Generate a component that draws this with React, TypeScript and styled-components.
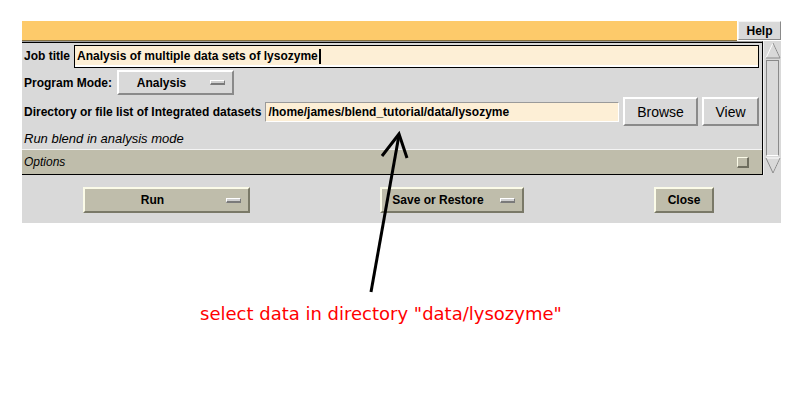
import React from "react";
import styled, { createGlobalStyle } from "styled-components";

const Global = createGlobalStyle`
  html, body { margin: 0; padding: 0; background: #ffffff; }
  body { font-family: "Liberation Sans", Arial, sans-serif; }
`;

const GRAY = "#d9d9d9";
const OLIVE = "#bfbdab";
const CREAM = "#fdefd6";
const ORANGE = "#fdca6a";

const Page = styled.div`
  position: relative;
  width: 800px;
  height: 400px;
  overflow: hidden;
  background: #fff;
`;

const Window = styled.div`
  margin: 21px 0 0 22px;
  width: 759px;
  display: flex;
  flex-direction: column;
`;

const TitleBar = styled.div`
  display: flex;
  height: 20px;
  gap: 1px;
`;

const Banner = styled.div`
  flex: 1;
  background: ${ORANGE};
  border-bottom: 1px solid #85703f;
`;

const HelpButton = styled.div`
  width: 43px;
  height: 19px;
  box-sizing: border-box;
  background: ${GRAY};
  border-top: 1px solid #f4f4f4;
  border-left: 1px solid #f4f4f4;
  border-right: 1px solid #8a8a8a;
  border-bottom: 1px solid #8a8a8a;
  display: flex;
  align-items: center;
  justify-content: center;
  font-size: 12px;
  font-weight: bold;
  color: #000;
`;

const Main = styled.div`
  display: flex;
  height: 134px;
`;

const Form = styled.div`
  width: 741px;
  box-sizing: border-box;
  background: ${GRAY};
  border-top: 1px solid #9a9a9a;
  border-right: 1px solid #000;
  border-bottom: 1px solid #000;
  padding-top: 1px;
  box-shadow: inset 0 1px 0 #000;
  display: flex;
  flex-direction: column;
`;

const Row = styled.div<{ $h: number }>`
  height: ${(p) => p.$h}px;
  display: flex;
  align-items: center;
  padding: 0 3px 0 2px;
  gap: 4px;
`;

const Label = styled.span<{ $w?: number }>`
  font-size: 12px;
  font-weight: bold;
  color: #000;
  white-space: nowrap;
  ${(p) => (p.$w ? `width: ${p.$w}px;` : "")}
`;

const TextField = styled.div<{ $focused?: boolean; $h: number }>`
  flex: 1;
  height: ${(p) => p.$h}px;
  box-sizing: border-box;
  background: ${CREAM};
  display: flex;
  align-items: center;
  padding-left: 2px;
  font-size: 12px;
  font-weight: bold;
  color: #000;
  white-space: nowrap;
  ${(p) =>
    p.$focused
      ? `border: 1px solid #000; box-shadow: inset 0 -2px 0 #ffffff;`
      : `border-top: 1px solid #9a9a9a; border-left: 1px solid #9a9a9a; border-right: 1px solid #ffffff; border-bottom: 1px solid #ffffff;`}
`;

const Caret = styled.span`
  display: inline-block;
  width: 2px;
  height: 15px;
  background: #000;
  margin-left: 1px;
`;

const MenuButton = styled.div<{ $w: number; $h: number; $tone: "gray" | "olive" }>`
  width: ${(p) => p.$w}px;
  height: ${(p) => p.$h}px;
  box-sizing: border-box;
  background: ${(p) => (p.$tone === "olive" ? OLIVE : GRAY)};
  border-top: 2px solid ${(p) => (p.$tone === "olive" ? "#fbfbe8" : "#ffffff")};
  border-left: 2px solid ${(p) => (p.$tone === "olive" ? "#fbfbe8" : "#ffffff")};
  border-right: 2px solid ${(p) => (p.$tone === "olive" ? "#7a7968" : "#8a8a8a")};
  border-bottom: 2px solid ${(p) => (p.$tone === "olive" ? "#7a7968" : "#8a8a8a")};
  display: flex;
  align-items: center;
  font-size: 12px;
  font-weight: bold;
  color: #000;
  flex-shrink: 0;
`;

const MenuText = styled.span`
  flex: 1;
  text-align: center;
  white-space: nowrap;
`;

const Indicator = styled.span`
  width: 15px;
  height: 5px;
  box-sizing: border-box;
  margin: 0 7px 0 6px;
  border-top: 1px solid #ffffff;
  border-left: 1px solid #ffffff;
  border-right: 1px solid #7a7a7a;
  border-bottom: 2px solid #7a7a7a;
  background: #cfcfcf;
  flex-shrink: 0;
`;

const PushButton = styled.div<{ $w: number }>`
  width: ${(p) => p.$w}px;
  height: 29px;
  box-sizing: border-box;
  background: ${GRAY};
  border-top: 2px solid #ffffff;
  border-left: 2px solid #ffffff;
  border-right: 2px solid #8a8a8a;
  border-bottom: 2px solid #8a8a8a;
  display: flex;
  align-items: center;
  justify-content: center;
  font-size: 14px;
  color: #000;
  flex-shrink: 0;
`;

const Hint = styled.div`
  height: 22px;
  display: flex;
  align-items: center;
  padding-left: 2px;
  font-size: 13px;
  font-style: italic;
  color: #000;
`;

const Divider = styled.div`
  height: 1px;
  background: #f4f4f4;
`;

const OptionsBar = styled.div`
  height: 24px;
  background: ${OLIVE};
  display: flex;
  align-items: center;
  justify-content: space-between;
  padding: 0 13px 0 2px;
  font-size: 12px;
  font-style: italic;
  color: #000;
`;

const ToggleBox = styled.span`
  width: 12px;
  height: 11px;
  box-sizing: border-box;
  border-top: 1px solid #fbfbe8;
  border-left: 1px solid #fbfbe8;
  border-right: 2px solid #6f6e5f;
  border-bottom: 2px solid #6f6e5f;
  background: ${OLIVE};
`;

const Scrollbar = styled.div`
  width: 18px;
  box-sizing: border-box;
  background: ${GRAY};
  border-left: 1px solid #efefef;
  display: flex;
  flex-direction: column;
  align-items: center;
  padding: 1px 0 1px;
`;

const Slider = styled.div`
  flex: 1;
  width: 13px;
  box-sizing: border-box;
  border-left: 1px solid #8a8a8a;
  border-right: 1px solid #8a8a8a;
  border-top: 1px solid #8a8a8a;
  border-bottom: 1px solid #ffffff;
  background: ${GRAY};
  margin: 1px 0;
`;

const ActionBar = styled.div`
  height: 48px;
  box-sizing: border-box;
  background: ${GRAY};
  display: flex;
  align-items: flex-start;
  padding: 12px 0 0 61px;
  gap: 130px;
`;

const Note = styled.div`
  margin: 80px 0 0 200px;
  font-family: "DejaVu Sans", sans-serif;
  font-size: 18px;
  color: #ff0000;
  white-space: nowrap;
`;

const Overlay = styled.svg`
  position: absolute;
  left: 0;
  top: 0;
  pointer-events: none;
`;

const ScrollArrow: React.FC<{ dir: "up" | "down" }> = ({ dir }) => (
  <svg width="16" height="17" viewBox="0 0 16 17">
    {dir === "up" ? (
      <>
        <polyline points="1,16 8,1 15,16" fill="none" stroke="#ffffff" strokeWidth="1" />
        <polyline points="1,16 15,16 8,1" fill="none" stroke="#8a8a8a" strokeWidth="1" />
      </>
    ) : (
      <>
        <polyline points="1,1 15,1 8,16" fill="none" stroke="#ffffff" strokeWidth="1" />
        <polyline points="1,1 8,16 15,1" fill="none" stroke="#8a8a8a" strokeWidth="1" />
      </>
    )}
  </svg>
);

export default function App() {
  return (
    <Page>
      <Global />
      <Window>
        <TitleBar>
          <Banner />
          <HelpButton>Help</HelpButton>
        </TitleBar>
        <Main>
          <Form>
            <Row $h={26}>
              <Label>Job title</Label>
              <TextField $focused $h={23}>
                Analysis of multiple data sets of lysozyme
                <Caret />
              </TextField>
            </Row>
            <Row $h={27}>
              <Label $w={89}>Program Mode:</Label>
              <MenuButton $w={117} $h={25} $tone="gray">
                <MenuText>Analysis</MenuText>
                <Indicator />
              </MenuButton>
            </Row>
            <Row $h={31}>
              <Label>Directory or file list of Integrated datasets</Label>
              <TextField $h={20}>/home/james/blend_tutorial/data/lysozyme</TextField>
              <PushButton $w={75}>Browse</PushButton>
              <PushButton $w={57}>View</PushButton>
            </Row>
            <Hint>Run blend in analysis mode</Hint>
            <Divider />
            <OptionsBar>
              <span>Options</span>
              <ToggleBox />
            </OptionsBar>
          </Form>
          <Scrollbar>
            <ScrollArrow dir="up" />
            <Slider />
            <ScrollArrow dir="down" />
          </Scrollbar>
        </Main>
        <ActionBar>
          <MenuButton $w={167} $h={26} $tone="olive">
            <MenuText>Run</MenuText>
            <Indicator />
          </MenuButton>
          <MenuButton $w={144} $h={26} $tone="olive">
            <MenuText>Save or Restore</MenuText>
            <Indicator />
          </MenuButton>
          <MenuButton $w={60} $h={26} $tone="olive">
            <MenuText>Close</MenuText>
          </MenuButton>
        </ActionBar>
      </Window>
      <Note>select data in directory "data/lysozyme"</Note>
      <Overlay width="800" height="400" viewBox="0 0 800 400">
        <line x1="371" y1="292" x2="399" y2="135" stroke="#000" strokeWidth="3" />
        <polyline
          points="382,156 399,134 407,158"
          fill="none"
          stroke="#000"
          strokeWidth="3"
          strokeLinejoin="miter"
        />
      </Overlay>
    </Page>
  );
}
